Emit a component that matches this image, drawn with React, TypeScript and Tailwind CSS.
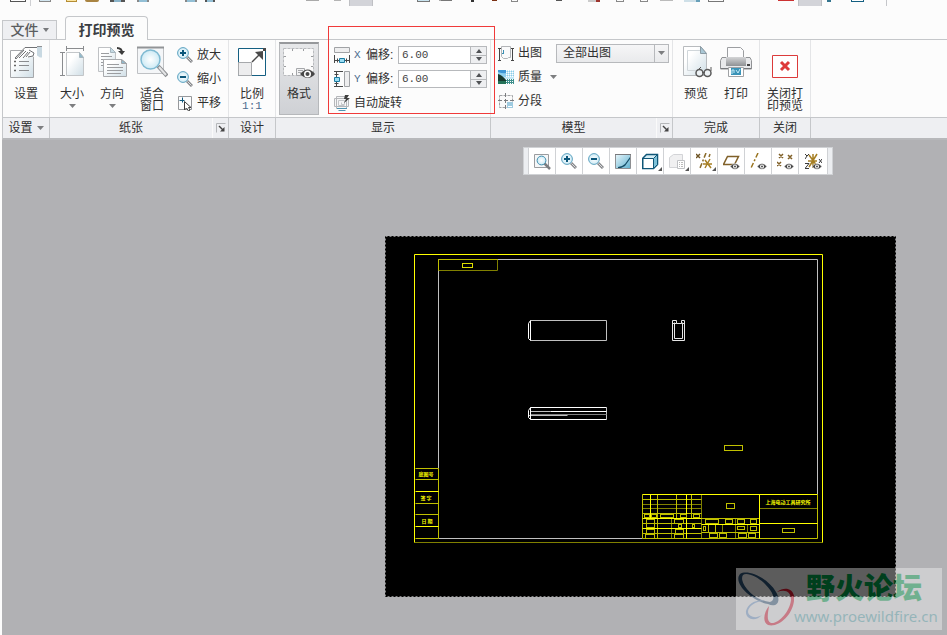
import * as React from 'react'

const font = "font-['Liberation_Sans','Noto_Sans_CJK_SC',sans-serif]"

type Box = [number, number, number, number]

function Svg({ w, h, children }: { w: number; h: number; children: React.ReactNode }) {
  return (
    <svg width={w} height={h} viewBox={`0 0 ${w} ${h}`} fill="none" className="shrink-0" aria-hidden="true">
      {children}
    </svg>
  )
}

function Gradients() {
  return (
    <svg width="0" height="0" className="absolute" aria-hidden="true">
      <defs>
        <linearGradient id="paper" x1="0" y1="0" x2="1" y2="1">
          <stop offset="0.3" stopColor="#ffffff" />
          <stop offset="1" stopColor="#cfdee6" />
        </linearGradient>
        <linearGradient id="metal" x1="0" y1="0" x2="0" y2="1">
          <stop offset="0" stopColor="#d4d5d7" />
          <stop offset="1" stopColor="#8f9194" />
        </linearGradient>
        <radialGradient id="glass">
          <stop offset="0" stopColor="#ffffff" />
          <stop offset="1" stopColor="#cdeaf5" />
        </radialGradient>
        <linearGradient id="sky" x1="0" y1="0" x2="1" y2="1">
          <stop offset="0" stopColor="#e8f6fb" />
          <stop offset="1" stopColor="#5fb2d0" />
        </linearGradient>
      </defs>
    </svg>
  )
}

function Caret({ className = '' }: { className?: string }) {
  return (
    <svg width="7" height="4" viewBox="0 0 7 4" className={`shrink-0 ${className}`} aria-hidden="true">
      <path d="M0 0h7L3.500 4z" fill="#7d7e80" />
    </svg>
  )
}

function SettingsIcon() {
  return (
    <Svg w={32} h={32}>
      <path d="M0.500 4.500h23v27h-23z" fill="url(#paper)" stroke="#a6a8ab" />
      <path d="M4 15.500h2M4 19.500h2M4 24.500h2" stroke="#666" strokeWidth="1.500" />
      <path d="M9 15.500h10M9 19.500h10M9 24.500h10" stroke="#8a8c8f" />
      <path d="M5 12L15 1h12v9l-6 1-3 1-3-1-3 1-2-1-4 2z" fill="#fff" />
      <path d="M15 1.500L5 12M14 4L6 13M16 5l-7 7M18 6l-5 6M20 6l-4 5M5 12l1 1M15 1.500h12M19 4l5 3-1 3-5 1" stroke="#707275" />
      <path d="M27 0.500h5v11h-2l-3-2z" fill="#c9d9e2" />
      <path d="M27 0.500h5" stroke="#909295" />
    </Svg>
  )
}

function SizeIcon() {
  return (
    <Svg w={32} h={32}>
      <path d="M10.500 2.500h17M10.500 0v5M27.500 0v5M6.500 6.500v23M4 6.500h5M4 29.500h5" stroke="#8a8c8f" />
      <path d="M10.500 6.500h13l4 5v18h-17z" fill="url(#paper)" stroke="#c3c6c9" />
      <path d="M23.500 6.500v5h4z" fill="#8fb9cc" stroke="#a7b6be" />
    </Svg>
  )
}

function OrientationIcon() {
  return (
    <Svg w={32} h={32}>
      <path d="M2.500 1.500h12l5 5v19h-17z" fill="url(#paper)" stroke="#bfc1c4" />
      <path d="M14.500 1.500v5h5z" fill="#c5dae4" stroke="#a7b6be" />
      <path d="M5 7.500h8M5 10.500h11M5 13.500h3M5 16.500h2M5 19.500h2" stroke="#9b9da0" />
      <path d="M7.500 13.500h18l5 4v13h-23z" fill="url(#paper)" stroke="#a9abae" />
      <path d="M25.500 13.500v4h5z" fill="#8fb9cc" stroke="#a1a3a6" />
      <path d="M11 18.500h12M11 21.500h16M11 24.500h16M11 27.500h14" stroke="#9b9da0" />
      <path d="M21 2q5 0 5 5" stroke="#3b3b3b" strokeWidth="2" />
      <path d="M22 5h7l-3 4z" fill="#3b3b3b" />
    </Svg>
  )
}

function FitIcon() {
  return (
    <Svg w={32} h={32}>
      <path d="M1.500 1.500h26v26h-26z" fill="#f4f6f8" stroke="#bfc1c4" />
      <path d="M1 1.500h27" stroke="#929497" strokeWidth="2" />
      <path d="M22 20l9 10" stroke="#8b8d90" strokeWidth="4" />
      <path d="M23 21l7 8" stroke="#e4e5e6" strokeWidth="2" />
      <circle cx="14.500" cy="13.500" r="9.500" fill="url(#glass)" stroke="#7fbad2" strokeWidth="1.500" />
    </Svg>
  )
}

function ZoomIcon({ minus = false }: { minus?: boolean }) {
  return (
    <Svg w={16} h={16}>
      <path d="M10 10l5 5" stroke="#85878a" strokeWidth="3" />
      <path d="M10.500 10.500l4 4" stroke="#dcdddf" />
      <circle cx="6" cy="6" r="5.400" fill="url(#glass)" stroke="#5ea3c0" />
      <path d={minus ? 'M3 6h6' : 'M3 6h6M6 3v6'} stroke="#0c577b" strokeWidth="2" />
    </Svg>
  )
}

function PanIcon() {
  return (
    <Svg w={16} h={16}>
      <path d="M1.500 1.500h13v13h-13z" fill="#fbfcfd" stroke="#96989b" />
      <path d="M2.500 5.500h5M5.500 2.500v5" stroke="#0c577b" />
      <path d="M7.500 6.500v8.500l2-2 2 3 1.500-1-1.500-2.500h2.500z" fill="#fff" stroke="#3d3d3d" />
    </Svg>
  )
}

function ScaleIcon() {
  return (
    <Svg w={28} h={28}>
      <path d="M0.500 0.500h27v27h-27z" fill="#fff" stroke="#145f82" />
      <path d="M0.500 14.500h13v13h-13z" fill="#ededee" stroke="#a6a8ab" />
      <path d="M14 14l9-9" stroke="#4a4a4a" strokeWidth="1.500" />
      <path d="M17 4l8-1v9z" fill="#4a4a4a" />
      <path d="M25 0h3v3h-3z" fill="#4a4a4a" />
    </Svg>
  )
}

function FormatIcon() {
  return (
    <Svg w={32} h={32}>
      <path d="M0.500 0.500h30v27h-30z" fill="#fbfbfb" stroke="#b9bbbe" strokeDasharray="3 1" />
      <path d="M9.500 1v2M20.500 1v2M9.500 25v2M1 8.500h2M1 18.500h2M28 8.500h2M28 18.500h2" stroke="#9a9c9f" />
      <path d="M13.500 20.500h8v7h-8z" fill="#f2f2f3" stroke="#a5a7aa" />
      <path d="M15 22.500h5M15 24.500h3" stroke="#a5a7aa" />
      <path d="M17 26q8-9 15 0-7 8-15 0z" fill="#474747" />
      <circle cx="24.500" cy="26" r="3.500" fill="#fff" />
      <circle cx="24.500" cy="26" r="2" fill="#474747" />
    </Svg>
  )
}

function OffsetXIcon() {
  return (
    <Svg w={16} h={16}>
      <path d="M0.500 0.500h15v5h-15z" fill="#eeeeef" stroke="#a0a2a5" />
      <path d="M0.500 8v8M15.500 8v8M1 13.500h14M3.500 11.500v4M12.500 11.500v4" stroke="#484848" />
      <path d="M5.500 11.500h5v4h-5z" fill="#9adcf2" stroke="#1c7ba1" />
    </Svg>
  )
}

function OffsetYIcon() {
  return (
    <Svg w={16} h={16}>
      <path d="M10.500 0.500h5v15h-5z" fill="#eeeeef" stroke="#a0a2a5" />
      <path d="M0 0.500h9M0 15.500h9M2.500 1v14M0.500 3.500h4M0.500 12.500h4" stroke="#484848" />
      <path d="M0.500 6.500h5v4h-5z" fill="#9adcf2" stroke="#1c7ba1" />
    </Svg>
  )
}

function AutoRotateIcon() {
  return (
    <Svg w={16} h={16}>
      <path d="M0.500 3.500h14v8h-14zM2.500 1.500h10v12h-10z" fill="#f6f6f7" stroke="#b5b7ba" />
      <path d="M4.500 5.500h6v4h-3v-2M4.500 5.500v5h6" stroke="#c4c6c9" />
      <path d="M3 13.500h10M4.500 15.500h7" stroke="#4e93b0" />
      <path d="M11 0h4l-2 3h3l-6 5 2-4h-2z" fill="#3e3e3e" />
    </Svg>
  )
}

function PlotIcon() {
  return (
    <Svg w={16} h={16}>
      <path d="M1.500 3v12M14.500 3v12M0 3.500h3M13 3.500h3M0 15.500h3M13 15.500h3" stroke="#454545" />
      <path d="M3.500 1.500h9v11h-2l-1 1h-4l-2-2z" fill="#fafafb" stroke="#b2b4b7" />
      <path d="M5.500 5v3M4 8.500h2" stroke="#3a8fb3" />
    </Svg>
  )
}

function QualityIcon() {
  return (
    <Svg w={16} h={14}>
      <path d="M0 0h16v14H0z" fill="#c3e8f7" />
      <path d="M0 0h8v7H0z" fill="#3f97d6" />
      <path d="M0 2q5 2 8 1v4H0z" fill="#8fd0ef" />
      <path d="M0 4q4 1 8 6v4H0z" fill="#17392f" />
      <path d="M0 11h8v3H0z" fill="#247258" />
      <path d="M8 9h8v5H8z" fill="#3d8f8c" />
      <path d="M8 0.500h8M8 2.500h8M8 4.500h8M8 6.500h8M8 9.500h8M8 11.500h8M8 13.500h8" stroke="#fff" strokeDasharray="1 1" />
      <path d="M9 1.500h7M9 3.500h7M9 5.500h7" stroke="#8fcbe4" strokeDasharray="1 1" />
    </Svg>
  )
}

function SegmentIcon() {
  return (
    <Svg w={16} h={16}>
      <path d="M1.500 2.500h13v12h-13z" fill="#fafafa" stroke="#a0a2a5" strokeDasharray="3 1" />
      <path d="M7.500 0v16M0 7.500h16" stroke="#7b7d80" strokeDasharray="4 2" />
      <path d="M9 9h6v6H9z" fill="#9fcbe0" />
      <path d="M10 13.500h4" stroke="#fff" />
    </Svg>
  )
}

function PreviewIcon() {
  return (
    <Svg w={32} h={32}>
      <path d="M3.500 0.500h17l6 7v22h-23z" fill="url(#paper)" stroke="#b8bbbe" />
      <path d="M20 4.500H7.500v20h13" stroke="#d0d6da" />
      <path d="M20.500 0.500v7h6z" fill="#a9c7d5" stroke="#8b9ba4" />
      <circle cx="19.500" cy="27" r="3.500" fill="#eef3f6" stroke="#5a5a5a" strokeWidth="1.500" />
      <circle cx="27.500" cy="27" r="3.500" fill="#eef3f6" stroke="#5a5a5a" strokeWidth="1.500" />
      <path d="M17 25l4-4M31 25v-4M22 26.500h3" stroke="#5a5a5a" />
    </Svg>
  )
}

function PrintIcon() {
  return (
    <Svg w={32} h={32}>
      <path d="M7.500 1.500h13l3 3v8h-16z" fill="#fcfcfd" stroke="#9c9ea1" />
      <path d="M2 11.500h28l1.500 3v8.500h-31v-8.500z" fill="#e8e9eb" stroke="#909295" />
      <path d="M6 11h20v9H6z" fill="url(#metal)" />
      <path d="M1 22.500h30" stroke="#77797c" />
      <path d="M27 18h3v2h-3z" fill="#444" />
      <path d="M8.500 21.500h15v9h-15z" fill="#fff" stroke="#a0a2a5" />
      <path d="M11 22h10v7H11z" fill="#3a93b7" />
      <path d="M12 28v-4h2v3M16 24l2 3 2-4" stroke="#c7ebf7" />
    </Svg>
  )
}

function CloseIcon() {
  return (
    <Svg w={32} h={32}>
      <path d="M3.500 9.500h25v22h-25z" fill="#fff" stroke="#dc3b3b" />
      <path d="M12 16l8 8M20 16l-8 8" stroke="#dd3a3a" strokeWidth="3" />
    </Svg>
  )
}

function Eye() {
  return (
    <g>
      <path d="M7 13.500q5-6 10 0-5 5.500-10 0z" fill="#4a4a4a" stroke="#fff" strokeWidth="0.500" />
      <circle cx="12" cy="13.500" r="2" fill="#fff" />
      <circle cx="12" cy="13.500" r="1" fill="#4a4a4a" />
    </g>
  )
}

const viewTools = [
  {
    label: '重新调整',
    icon: (
      <>
        <path d="M0.500 1.500h14v13h-14z" fill="#f6f7f8" stroke="#9a9c9f" />
        <path d="M10 10l6 6" stroke="#7c7e81" strokeWidth="2.500" />
        <circle cx="7.500" cy="7.500" r="4.400" fill="url(#glass)" stroke="#3f8eae" />
      </>
    ),
  },
  { label: '放大', icon: <ZoomIcon /> },
  { label: '缩小', icon: <ZoomIcon minus /> },
  {
    label: '重画',
    icon: (
      <>
        <path d="M0.500 1.500h15v14h-15z" fill="url(#sky)" stroke="#8d8f92" />
        <path d="M0 1.500h16" stroke="#77797c" />
        <path d="M15 4l-5 7-3 2-4 1v1h3l4-2 5-7z" fill="#144d66" />
      </>
    ),
  },
  {
    label: '显示样式',
    more: true,
    icon: (
      <>
        <path d="M0.500 5.500l4-4h11v10l-4 4h-11z" fill="#d5eef6" stroke="#0f5677" strokeWidth="1.500" />
        <path d="M11.500 5.500v10l4-4v-10z" fill="#7dc1d8" stroke="#0f5677" />
        <path d="M1 5.500h10.500v10H1z" fill="#fff" stroke="#0f5677" />
      </>
    ),
  },
  {
    label: '视图管理器',
    more: true,
    icon: (
      <>
        <path d="M0.500 4.500l4-3h9v9l-3 4h-10z" fill="#f0f0f1" stroke="#d3d4d7" />
        <path d="M8.500 7.500h7v8h-7z" fill="#fff" stroke="#bfc1c4" />
        <path d="M10 9.500h1M10 11.500h1M10 13.500h1M12 9.500h2M12 11.500h2M12 13.500h2" stroke="#bbb" />
      </>
    ),
  },
  {
    label: '基准显示过滤器',
    more: true,
    icon: (
      <>
        <path d="M0 1l4 4M4 1L0 5" stroke="#6d5324" strokeWidth="1.500" />
        <path d="M10 0L4 15" stroke="#8b6c2b" strokeWidth="1.500" strokeDasharray="5 2 2 2" />
        <path d="M7 11h9M9 7l6 8M14 6L9 15" stroke="#a67f24" strokeWidth="1.500" />
        <path d="M14 1l-1 3" stroke="#8b6c2b" strokeWidth="1.500" />
      </>
    ),
  },
  {
    label: '平面显示',
    icon: (
      <>
        <path d="M4.500 3.500h11l-4 8h-11z" fill="#fff" stroke="#806028" strokeWidth="1.500" />
        <Eye />
      </>
    ),
  },
  {
    label: '轴显示',
    icon: (
      <>
        <path d="M8 0L1 15" stroke="#99731f" strokeWidth="1.500" strokeDasharray="5 2 2 2" />
        <Eye />
      </>
    ),
  },
  {
    label: '点显示',
    icon: (
      <>
        <path d="M2 1l4 4M6 1L2 5M11 2l4 4M15 2l-4 4M0 9l4 4M4 9l-4 4" stroke="#806028" strokeWidth="1.500" />
        <Eye />
      </>
    ),
  },
  {
    label: '坐标系显示',
    icon: (
      <>
        <path d="M8 1v14M3 8h9M4 2l8 11M12 1L4 14" stroke="#a67f24" strokeWidth="1.500" />
        <path d="M0 1l2 2 2-2M2 3L0 6M0 10.500h4l-4 5h4M14 6l3 4M17 6l-3 4" stroke="#3a3a3a" />
        <Eye />
      </>
    ),
  },
]

const quickItems = [
  'ml-[8px] w-4 h-[2px] border-x border-b border-[#555] bg-white',
  'ml-[4px] w-px h-[6px] bg-[#cfd0d3]',
  'ml-[8px] w-3 h-[2px] border-x border-b border-[#888] bg-[#d3e6f0]',
  'ml-[15px] w-[11px] h-[2px] border-x border-b border-[#b58d34] bg-[#fbe5a1]',
  'ml-[8px] w-[14px] h-[2px] bg-[#a98442] rounded-b-sm',
  'ml-[11px] w-[15px] h-[2px] border-x-4 border-[#555] bg-[#8bb4ca]',
  'ml-[12px] w-3 h-[2px] border-x-2 border-[#888] bg-[#93bfd5]',
  'ml-[36px] w-3 h-[2px] border-x-2 border-[#888] bg-[#93bfd5]',
  'ml-[8px] w-[10px] h-[2px] border-x-2 border-[#555] bg-[#93bfd5]',
  'ml-[91px] w-[13px] h-px bg-[#aaa]',
  'ml-[15px] w-[7px] h-px bg-[#b5b5b5]',
  'ml-[8px] w-6 h-[6px] border-x border-[#bfc0c4] bg-[#d3d4d9]',
  'ml-[44px] w-[13px] h-[2px] border-x border-b border-[#777] bg-[#c9e4f0]',
  'ml-[9px] w-[13px] h-px border-l-2 border-[#aaa] bg-[#777]',
  'ml-[19px] w-[3px] h-[2px] bg-[#333]',
  'ml-[18px] w-[5px] h-px bg-[#7b3115]',
  'ml-[14px] w-[7px] h-[2px] border-x border-b border-[#888]',
  'ml-[38px] w-[6px] h-px bg-[#555]',
  'ml-[26px] w-[12px] h-[2px] border-r-4 border-[#9d352e] bg-[#ccc]',
  'ml-[16px] w-2 h-[2px] border-x border-b border-[#888]',
  'ml-[16px] w-2 h-[2px] border-x border-b border-[#888]',
  'ml-[12px] w-[13px] h-px bg-[#bbb]',
  'ml-[11px] w-4 h-[2px] border-r-4 border-[#68a0b9] bg-[#cfe0e8]',
  'ml-[8px] w-4 h-[2px] border-x border-b border-[#777]',
  'ml-[54px] w-4 h-px bg-[#cc3232]',
  'ml-[4px] w-6 h-[6px] border-x border-[#bfc0c4] bg-[#d3d4d9]',
  'ml-[5px] w-[4px] h-[2px] bg-[#34758f]',
  'ml-[20px] w-[13px] h-[2px] border-x border-b border-[#145f82] bg-white',
  'ml-[22px] w-px h-[6px] bg-[#c5c6ca]',
]

function Group({
  label,
  width,
  menu,
  launcher,
  children,
}: {
  label: string
  width: string
  menu?: boolean
  launcher?: boolean
  children: React.ReactNode
}) {
  return (
    <section aria-label={label} className={`relative flex shrink-0 flex-col ${width}`}>
      <div className="flex h-[77px] border-r border-[#e4e5e7]">{children}</div>
      <div className="flex h-[21px] items-center border-t border-r border-[#c5c7ca] bg-[#eeeff2]">
        {menu ? (
          <button className="flex flex-1 items-center justify-center gap-1">
            {label}
            <Caret />
          </button>
        ) : (
          <span className="flex-1 text-center">{label}</span>
        )}
        {launcher && (
          <button
            aria-label={`${label}选项`}
            className="flex h-full w-4 items-center justify-center border-l border-[#fafafa]"
          >
            <Svg w={10} h={10}>
              <path d="M0.500 9.500v-9h9" stroke="#b4b6b9" />
              <path d="M3 3l4 4" stroke="#444" strokeWidth="1.500" />
              <path d="M8.500 4v4.500H4z" fill="#444" />
            </Svg>
          </button>
        )}
      </div>
    </section>
  )
}

function BigButton({ icon, label, menu }: { icon: React.ReactNode; label: string; menu?: boolean }) {
  return (
    <button className="flex w-10 shrink-0 flex-col items-center pt-[6px] leading-3">
      <span className="mb-[10px] flex h-8 items-center">{icon}</span>
      <span className="whitespace-pre">{label}</span>
      {menu && <Caret className="mt-[4px]" />}
    </button>
  )
}

function SmallButton({ icon, label }: { icon: React.ReactNode; label: string }) {
  return (
    <button className="flex h-6 items-center gap-[4px] whitespace-nowrap">
      {icon}
      {label}
    </button>
  )
}

function OffsetField({ axis, icon }: { axis: string; icon: React.ReactNode }) {
  const [value, setValue] = React.useState('6.00')
  const step = (by: number) => setValue((Number(value) + by).toFixed(2))
  const id = `offset-${axis}`
  return (
    <div className="flex h-6 items-center">
      {icon}
      <label htmlFor={id} className="ml-1 flex w-[44px] gap-[5px] whitespace-nowrap">
        <span className="w-[7px] font-['Liberation_Mono',monospace] text-[11px] leading-4 text-[#4a6a8c]">{axis}</span>
        <span>偏移:</span>
      </label>
      <div className="flex h-[18px] w-[89px] border border-[#b7b9bc] bg-white">
        <input
          id={id}
          value={value}
          onChange={(e) => setValue(e.target.value)}
          className="min-w-0 flex-1 pl-[3px] font-['Liberation_Mono',monospace] text-[11px] text-[#444] outline-none"
        />
        <div className="flex w-4 flex-col divide-y divide-[#b7b9bc] border-l border-[#b7b9bc] bg-[#eeeff1]">
          <button aria-label="增加" onClick={() => step(1)} className="flex flex-1 items-center justify-center">
            <Svg w={6} h={4}>
              <path d="M0 4h6L3 0z" fill="#505255" />
            </Svg>
          </button>
          <button aria-label="减少" onClick={() => step(-1)} className="flex flex-1 items-center justify-center">
            <Svg w={6} h={4}>
              <path d="M0 0h6L3 4z" fill="#505255" />
            </Svg>
          </button>
        </div>
      </div>
    </div>
  )
}

function Ribbon() {
  return (
    <div className="flex border-t border-b-2 border-l border-[#c5c7ca] border-b-[#b7b8bb] text-xs text-[#303030]">
      <Group label="设置" width="w-[47px]" menu>
        <div className="pl-[3px]">
          <BigButton icon={<SettingsIcon />} label="设置" />
        </div>
      </Group>
      <Group label="纸张" width="w-[179px]" launcher>
        <div className="flex pl-[2px]">
          <BigButton icon={<SizeIcon />} label="大小" menu />
          <BigButton icon={<OrientationIcon />} label="方向" menu />
          <BigButton icon={<FitIcon />} label={'适合\n窗口'} />
        </div>
        <div className="flex flex-col pt-[3px] pl-[5px]">
          <SmallButton icon={<ZoomIcon />} label="放大" />
          <SmallButton icon={<ZoomIcon minus />} label="缩小" />
          <SmallButton icon={<PanIcon />} label="平移" />
        </div>
      </Group>
      <Group label="设计" width="w-[47px]">
        <div className="flex pl-[3px]">
          <button className="flex w-10 flex-col items-center pt-[6px] leading-3">
            <span className="mb-[10px] flex h-8 items-center">
              <ScaleIcon />
            </span>
            比例
            <span className="font-['Liberation_Mono',monospace] text-[11px] text-[#4a6a8c]">1:1</span>
          </button>
        </div>
      </Group>
      <Group label="显示" width="w-[215px]">
        <button
          aria-pressed="true"
          className="mt-[2px] ml-[3px] flex h-[73px] w-10 shrink-0 flex-col items-center border border-t-2 border-[#b6b8bb] border-t-[#96989b] bg-linear-to-b from-[#e6e7e9] to-[#cfd1d5] pt-1 leading-3"
        >
          <span className="mb-[8px]">
            <FormatIcon />
          </span>
          格式
        </button>
        <div className="flex flex-col pt-[3px] pl-[15px]">
          <OffsetField axis="X" icon={<OffsetXIcon />} />
          <OffsetField axis="Y" icon={<OffsetYIcon />} />
          <SmallButton icon={<AutoRotateIcon />} label="自动旋转" />
        </div>
        <div className="pointer-events-none absolute -top-[14px] left-[52px] z-10 h-[88px] w-[167px] border border-[#f03a3a]" />
      </Group>
      <Group label="模型" width="w-[182px]" launcher>
        <div className="flex flex-col pt-px pl-[7px]">
          <div className="flex items-center">
            <SmallButton icon={<PlotIcon />} label="出图" />
            <div className="relative ml-[14px]">
              <select
                aria-label="出图"
                className="block h-[19px] w-[113px] appearance-none border border-[#b7b9bc] bg-linear-to-b from-[#f6f6f7] to-[#e9eaec] pl-[6px] text-xs leading-4"
              >
                <option>全部出图</option>
              </select>
              <span className="pointer-events-none absolute inset-y-px right-px flex w-[14px] items-center justify-center border-l border-[#b7b9bc]">
                <Caret />
              </span>
            </div>
          </div>
          <button className="flex h-6 items-center gap-[4px]">
            <QualityIcon />
            质量
            <Caret className="ml-1" />
          </button>
          <SmallButton icon={<SegmentIcon />} label="分段" />
        </div>
      </Group>
      <Group label="完成" width="w-[87px]">
        <div className="flex pl-[3px]">
          <BigButton icon={<PreviewIcon />} label="预览" />
          <BigButton icon={<PrintIcon />} label="打印" />
        </div>
      </Group>
      <Group label="关闭" width="w-[51px]">
        <div className="flex pl-[5px]">
          <BigButton icon={<CloseIcon />} label={'关闭打\n印预览'} />
        </div>
      </Group>
      <div className="flex flex-1 flex-col">
        <div className="h-[77px]" />
        <div className="h-[21px] border-t border-[#c5c7ca] bg-[#eeeff2]" />
      </div>
    </div>
  )
}

function ViewToolbar() {
  return (
    <div className="mt-[7px] mr-[114px] flex h-7 border border-[#d0d2d5] bg-[#eceef1] px-1">
      <div className="flex divide-x divide-[#d0d2d5] border-x border-[#d0d2d5] bg-white">
        {viewTools.map((tool) => (
          <button
            key={tool.label}
            aria-label={tool.label}
            className="relative flex w-[27px] items-center justify-center last:w-7"
          >
            <Svg w={17} h={17}>
              {tool.icon}
            </Svg>
            {tool.more && (
              <svg width="4" height="4" className="absolute right-px bottom-[3px]" aria-hidden="true">
                <path d="M4 0v4H0z" fill="#555" />
              </svg>
            )}
          </button>
        ))}
      </div>
    </div>
  )
}

// x1, y1, x2, y2 in sheet units
const bright: Box[] = [
  [257, 258, 432, 258],
  [265, 258, 265, 282],
  [257, 282, 316, 282],
  [257, 292, 316, 292],
  [301, 258, 301, 302],
  [316, 288, 374, 288],
  [374, 287, 432, 287],
  [374, 258, 374, 302],
  [30, 255, 53, 255],
  [30, 290, 53, 290],
]
const medium: Box[] = [
  [257, 258, 257, 302],
  [257, 302, 432, 302],
  [432, 258, 432, 302],
  [272, 258, 272, 302],
  [291, 258, 291, 282],
  [306, 258, 306, 282],
  [257, 263, 316, 263],
  [257, 277, 316, 277],
  [257, 287, 316, 287],
  [257, 297, 316, 297],
  [316, 282, 374, 282],
  [316, 296, 374, 296],
  [30, 232, 53, 232],
  [30, 243, 53, 243],
  [30, 267, 53, 267],
  [30, 278, 53, 278],
  [30, 302, 53, 302],
  [53, 232, 53, 302],
  [323, 288, 323, 296],
  [330, 288, 330, 296],
]
const dim: Box[] = [
  [257, 268, 316, 268],
  [257, 272, 316, 272],
  [316, 258, 316, 302],
  [374, 272, 432, 272],
  [286, 282, 286, 302],
  [337, 288, 337, 296],
  [350, 282, 350, 302],
  [362, 288, 362, 296],
  [29, 306, 437, 306],
]
const cells: Box[] = [
  [259, 278, 5, 3],
  [266, 278, 5, 3],
  [275, 278, 13, 3],
  [295, 278, 6, 3],
  [308, 278, 6, 3],
  [261, 283, 8, 8],
  [289, 283, 9, 4],
  [293, 288, 3, 3],
  [307, 288, 2, 3],
  [261, 293, 8, 4],
  [290, 293, 8, 4],
  [260, 298, 9, 4],
  [289, 298, 9, 4],
  [320, 283, 13, 4],
  [340, 283, 7, 4],
  [352, 283, 7, 4],
  [365, 283, 6, 4],
  [318, 290, 2, 4],
  [352, 290, 7, 3],
  [365, 290, 6, 4],
  [324, 297, 8, 4],
  [334, 297, 7, 4],
  [353, 297, 8, 4],
  [363, 297, 7, 4],
  [341, 267, 8, 5],
  [397, 292, 12, 4],
  [339, 209, 18, 5],
]

function Lines({ items, color }: { items: Box[]; color: string }) {
  return (
    <g stroke={color}>
      {items.map(([x1, y1, x2, y2]) => (
        <line key={`${x1}-${y1}-${x2}-${y2}`} x1={x1} y1={y1} x2={x2} y2={y2} />
      ))}
    </g>
  )
}

function Sheet() {
  return (
    <svg
      width="511"
      height="361"
      viewBox="0 0 511 361"
      className="mt-[61px] mr-[51px] mb-[38px] shrink-0 bg-black"
      role="img"
      aria-label="图纸预览"
    >
      <rect x="0.500" y="0.500" width="510" height="360" fill="none" stroke="#858585" strokeDasharray="2 2" />
      <g transform="translate(0.5 0.5)" fill="none">
        <path d="M53 232V23H432V258M53 302H257" stroke="#c0c0c0" />
        <Lines items={dim} color="#808000" />
        <Lines items={medium} color="#c0c000" />
        <Lines items={bright} color="#ffff00" />
        <path d="M29 306V18H437V306" stroke="#ffff00" />
        <path d="M112 23V34H53" stroke="#808000" />
        <path d="M53 34V23H112" stroke="#c0c000" />
        <rect x="77" y="27" width="10" height="4" stroke="#dede00" />
        <g stroke="#c0c000">
          {cells.map(([x, y, w, h]) => (
            <rect key={`${x}-${y}`} x={x} y={y} width={w} height={h} />
          ))}
        </g>
        <g stroke="#c0c0c0">
          <path d="M145 84H221V104H145M221 171V183M145 175H165M143 179H182" />
          <path d="M145 178H221" stroke="#808080" />
          <path d="M145 84l-2 3V102l2 2V84M145 171l-2 3v7l2 2v-12H221M145 183H221M165 175H221" stroke="#fff" />
          <path d="M287 84H291V87H296V84H299V104H287ZM289 86V102H297V86M287 87H291M296 87H299" stroke="#e6e6e6" />
        </g>
      </g>
      <g fill="#ffff00" fontFamily="'Noto Sans CJK SC', sans-serif" fontWeight="700" textAnchor="middle">
        <text x="41" y="240" fontSize="5">底图号</text>
        <text x="41" y="264" fontSize="5">签 字</text>
        <text x="42" y="287" fontSize="5">日 期</text>
        <text x="403" y="268" fontSize="5">上海电动工具研究所</text>
      </g>
    </svg>
  )
}

function Watermark() {
  return (
    <div className="absolute right-[5px] bottom-[5px] flex h-[62px] w-[206px] bg-white opacity-[0.36]">
      <svg width="58" height="62" viewBox="0 0 58 62" fill="none" className="shrink-0" aria-hidden="true">
        <g fillRule="evenodd">
          <path
            d="M4 6C12 1 32 10 40 24C46 34 40 40 32 36C18 34-4 16 4 6ZM7 7C2 14 18 33 34 34C42 31 34 21 29 16C22 9 11 4 7 7Z"
            fill="#30597f"
          />
          <path
            d="M41 24C50 17 60 22 58 33C56 48 42 60 32 57C26 54 28 44 33 38C32 45 30 53 35 55C43 56 54 43 55 32C55 23 49 21 41 24Z"
            fill="#ee1c36"
          />
          <path d="M29 33C20 33 12 38 12 44C13 49 20 51 26 47C20 54 9 52 10 43C12 35 21 31 29 33Z" fill="#7faade" />
        </g>
      </svg>
      <div className="flex flex-col">
        <span className="pl-3 font-['Noto_Sans_CJK_SC',sans-serif] text-[29px] leading-9 font-black text-[#00b050]">
          野火论坛
        </span>
        <a
          href="http://www.proewildfire.cn"
          className="font-['Noto_Sans',sans-serif] text-[15px] leading-6 text-[#66bcc4]"
        >
          www.proewildfire.cn
        </a>
      </div>
    </div>
  )
}

export default function App() {
  return (
    <div className={`flex min-h-screen flex-col bg-[#fcfcfc] pl-[2px] ${font}`}>
      <Gradients />
      <header>
        <div className="flex h-4 items-start overflow-hidden" role="presentation">
          {quickItems.map((item, i) => (
            <span key={i} className={`shrink-0 ${item}`} />
          ))}
        </div>
        <nav className="flex h-[23px] items-end gap-2 text-sm font-bold">
          <button className="flex h-[19px] w-[55px] items-center justify-center gap-1 border border-b-0 border-[#c5c7ca] bg-[#eeeff2] font-medium text-[#5b5d60]">
            文件
            <svg width="6" height="4" viewBox="0 0 6 4" aria-hidden="true">
              <path d="M0 0h6L3 4z" fill="#77797c" />
            </svg>
          </button>
          <button
            aria-current="page"
            className="relative -mb-px h-6 w-[83px] rounded-t-sm border border-b-0 border-[#c5c7ca] bg-[#fcfcfc] pt-[2px] text-[#3a3d42]"
          >
            打印预览
          </button>
        </nav>
        <Ribbon />
      </header>
      <main className="relative flex flex-1 flex-col items-end bg-[#b1b1b4]">
        <ViewToolbar />
        <Sheet />
        <Watermark />
      </main>
    </div>
  )
}
